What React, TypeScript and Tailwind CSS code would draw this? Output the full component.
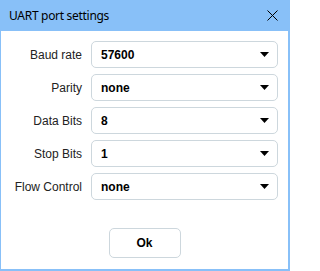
import React from 'react';

const fields = [
  { label: 'Baud rate', value: '57600' },
  { label: 'Parity', value: 'none' },
  { label: 'Data Bits', value: '8' },
  { label: 'Stop Bits', value: '1' },
  { label: 'Flow Control', value: 'none' },
];

const Caret = () => (
  <svg width="9" height="5" viewBox="0 0 9 5" className="shrink-0">
    <path d="M0 0h9L4.5 5z" fill="#000" />
  </svg>
);

export default function App() {
  return (
    <div className="w-[290px] h-[271px] bg-[#88c0f8] flex flex-col pl-px pr-[2px] pb-[2px]">
      <div className="h-[31px] shrink-0 flex items-center justify-between pl-2 pr-[10px]">
        <span
          className="text-[12px] tracking-[-0.3px] text-black"
          style={{ fontFamily: '"Noto Sans", sans-serif' }}
        >
          UART port settings
        </span>
        <svg width="11" height="11" viewBox="0 0 11 11">
          <path d="M0.5 0.5L10.5 10.5M10.5 0.5L0.5 10.5" stroke="#000" strokeWidth="1" />
        </svg>
      </div>
      <div
        className="flex-1 bg-white flex flex-col pt-[10px]"
        style={{ fontFamily: '"Liberation Sans", Arial, sans-serif' }}
      >
        <div className="flex flex-col gap-[6px]">
          {fields.map((f) => (
            <div key={f.label} className="flex items-center">
              <div className="w-[81px] text-right text-[12px] text-[#222]">{f.label}</div>
              <div className="ml-[9px] w-[187px] h-[27px] border border-[#cdd7dd] rounded-[5px] flex items-center justify-between pl-[9px] pr-[8px]">
                <span className="text-[12px] font-bold text-black">{f.value}</span>
                <Caret />
              </div>
            </div>
          ))}
        </div>
        <div className="flex justify-center mt-[28px]">
          <button className="w-[72px] h-[30px] border border-[#cdd7dd] rounded-[5px] bg-white text-[12px] font-bold text-black">
            Ok
          </button>
        </div>
      </div>
    </div>
  );
}
